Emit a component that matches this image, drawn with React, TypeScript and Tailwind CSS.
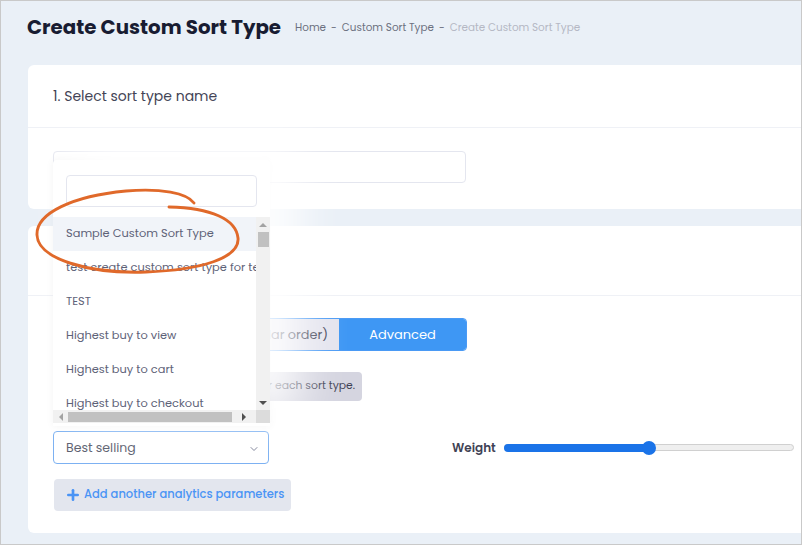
import { Plus, ChevronDown } from "lucide-react";

const options = [
  "Sample Custom Sort Type",
  "test create custom sort type for testing purposes",
  "TEST",
  "Highest buy to view",
  "Highest buy to cart",
  "Highest buy to checkout",
];

function SortDropdown() {
  return (
    <div className="absolute left-[52px] top-[159px] w-[217px] h-[266px] bg-white rounded-t-[4px] shadow-[25px_-15px_45px_5px_rgba(255,255,255,0.9),0_0_8px_rgba(0,0,0,0.05)] flex flex-col">
      <div className="px-[13px] pt-[15px] pb-[10px]">
        <div className="h-[32px] w-[191px] border border-[#e4e6ef] rounded-[4px]" />
      </div>
      <div className="flex h-[193px]">
        {/* list */}
        <div className="w-[203px] overflow-hidden">
          {options.map((o, i) => (
            <div
              key={o}
              className={`h-[34px] flex items-center pl-[13px] whitespace-nowrap text-[11.4px] text-[#5e6278] ${
                i === 0 ? "bg-[#f1f4f9]" : ""
              }`}
            >
              {o}
            </div>
          ))}
        </div>
        {/* vertical scrollbar */}
        <div className="w-[14px] bg-[#f1f1f1] flex flex-col items-center">
          <div className="h-[15px] flex items-center justify-center">
            <div className="w-0 h-0 border-l-[4px] border-r-[4px] border-b-[4px] border-l-transparent border-r-transparent border-b-[#a3a3a3]" />
          </div>
          <div className="w-[11px] h-[15px] bg-[#c1c1c1]" />
          <div className="flex-1" />
          <div className="h-[15px] flex items-center justify-center">
            <div className="w-0 h-0 border-l-[4px] border-r-[4px] border-t-[4px] border-l-transparent border-r-transparent border-t-[#505050]" />
          </div>
        </div>
      </div>
      {/* horizontal scrollbar */}
      <div className="flex h-[13px]">
        <div className="w-[203px] bg-[#f1f1f1] flex items-center">
          <div className="w-[15px] flex items-center justify-center">
            <div className="w-0 h-0 border-t-[4px] border-b-[4px] border-r-[4px] border-t-transparent border-b-transparent border-r-[#a3a3a3]" />
          </div>
          <div className="w-[164px] h-[10px] bg-[#c1c1c1]" />
          <div className="flex-1 flex items-center justify-center">
            <div className="w-0 h-0 border-t-[4px] border-b-[4px] border-l-[4px] border-t-transparent border-b-transparent border-l-[#505050]" />
          </div>
        </div>
        <div className="w-[14px] bg-[#dcdcdc]" />
      </div>
    </div>
  );
}

export default function App() {
  return (
    <div
      className="relative w-[802px] h-[545px] border border-[#c9c9c9] bg-[#eaf0f7] overflow-hidden"
      style={{ fontFamily: "Poppins, Inter, 'Open Sans', sans-serif" }}
    >
      {/* Page title + breadcrumb */}
      <div className="h-[64px] pl-[26px] pt-[12px] flex items-start gap-[14px]">
        <h1 className="text-[19.8px] leading-[28px] font-bold text-[#181c32]">
          Create Custom Sort Type
        </h1>
        <div className="mt-[8px] text-[10.4px] leading-[14px] text-[#6c7080] flex gap-[5px]">
          <span>Home</span>
          <span>-</span>
          <span>Custom Sort Type</span>
          <span>-</span>
          <span className="text-[#b5b8c4]">Create Custom Sort Type</span>
        </div>
      </div>

      {/* Card 1 */}
      <div className="ml-[27px] w-[900px] bg-white rounded-l-[6px]">
        <div className="h-[63px] border-b border-[#eff1f6] flex items-center pl-[25px]">
          <span className="text-[14px] text-[#3f4254]">1. Select sort type name</span>
        </div>
        <div className="pl-[25px] pt-[23px] pb-[26px]">
          <div className="w-[413px] h-[32px] border border-[#e4e6ef] rounded-[4px]" />
        </div>
      </div>

      {/* Card 2 */}
      <div className="mt-[17px] ml-[27px] w-[900px] h-[307px] bg-white rounded-l-[6px]">
        <div className="h-[70px] border-b border-[#eff1f6] flex items-center pl-[25px]">
          <span className="text-[14px] text-[#3f4254]">2. Set sort rules</span>
        </div>
        <div className="pl-[25px] pt-[22px]">
          <div className="flex w-[414px] h-[33px] border border-[#4a9af5] rounded-[4px] overflow-hidden">
            <div className="w-[285px] bg-[#e4e4ee] flex items-center justify-end pr-[11px] text-[12.8px] text-[#3f4254] whitespace-nowrap overflow-hidden">
              Basic (Sort products by a particular order)
            </div>
            <div className="flex-1 bg-[#3e97f4] flex items-center justify-center text-[13px] text-white">
              Advanced
            </div>
          </div>

          <div className="mt-[21px] w-[309px] flex h-[29px] items-center justify-end bg-[#d5d5e0] rounded-[4px] pr-[7px] text-[10.8px] text-[#3f4254] whitespace-nowrap overflow-hidden">
            Set the analytics parameters and weight for each sort type.
          </div>

          <div className="mt-[30px] flex items-center">
            <div className="w-[216px] h-[33px] border border-[#7cb1f2] rounded-[4px] flex items-center justify-between pl-[12px] pr-[8px] pt-[2px] text-[12.5px] text-[#5a5e6e]">
              <span>Best selling</span>
              <ChevronDown className="w-[12px] h-[12px] text-[#7e8299]" strokeWidth={2} />
            </div>
            <span className="ml-[183px] text-[12px] font-semibold text-[#3f4254]">Weight</span>
            <div className="ml-[8px] w-[290px] h-[12px] relative flex items-center">
              <div className="w-full h-[7px] rounded-full bg-[#efefef] border border-[#d0d0d0]" />
              <div className="absolute left-0 top-[2px] w-[145px] h-[8px] rounded-full bg-[#1a73e8]" />
              <div className="absolute left-[138px] top-[-1px] w-[14px] h-[14px] rounded-full bg-[#1a73e8]" />
            </div>
          </div>

          <button className="mt-[15px] ml-[1px] h-[32px] w-[237px] bg-[#e3e6ee] rounded-[4px] flex items-center pl-[11px] gap-[3px] text-[11.5px] font-medium text-[#4a94f5] whitespace-nowrap">
            <Plus className="w-[16px] h-[16px] shrink-0" strokeWidth={4} />
            Add another analytics parameters
          </button>
        </div>
      </div>

      <SortDropdown />

      {/* hand drawn highlight */}
      <svg
        className="absolute left-0 top-0 pointer-events-none"
        width="802"
        height="545"
        viewBox="0 0 802 545"
      >
        <path
          d="M 193 202 C 186 192 160 187 125 190 C 72 195 35 212 36 234 C 37 258 88 273 145 271 C 200 269 239 257 237 237 C 235 218 210 207 168 206"
          fill="none"
          stroke="#e0692a"
          strokeWidth={2.9}
          strokeLinecap="round"
        />
      </svg>
    </div>
  );
}
